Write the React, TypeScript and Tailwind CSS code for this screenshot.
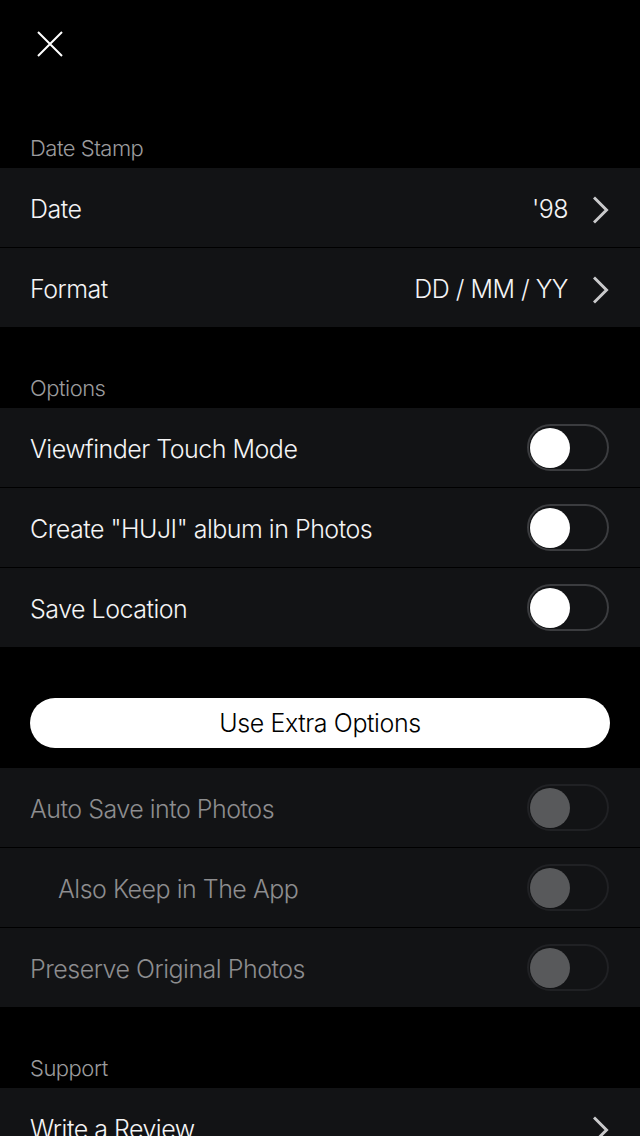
import React from "react";

const font = { fontFamily: "Inter, 'Noto Sans', sans-serif" };

function Chevron() {
  return (
    <svg width="16" height="28" viewBox="0 0 16 28" fill="none" aria-hidden className="mt-1 shrink-0">
      <path d="M2 2.5 L13.5 14 L2 25.5" stroke="#c9c9cb" strokeWidth="3" strokeLinecap="square" />
    </svg>
  );
}

function Toggle({ disabled }: { disabled?: boolean }) {
  return (
    <div
      className={
        "flex h-[47px] w-[82px] shrink-0 items-center rounded-full border-2 pl-px " +
        (disabled ? "border-[#202124]" : "border-[#3b3c3f]")
      }
    >
      <div className={"h-10 w-10 rounded-full " + (disabled ? "bg-[#58595b]" : "bg-white")} />
    </div>
  );
}

function SectionLabel({ children }: { children: React.ReactNode }) {
  return (
    <div className="flex h-20 items-end px-[30px] pb-[3px] text-[22px] font-light tracking-[-0.5px] text-[#9b9b9d]">
      {children}
    </div>
  );
}

function Row({
  label,
  value,
  chevron,
  toggle,
  disabled,
  indent,
}: {
  label: string;
  value?: string;
  chevron?: boolean;
  toggle?: boolean;
  disabled?: boolean;
  indent?: boolean;
}) {
  return (
    <div className="flex h-20 items-center border-b border-black bg-[#121315] pr-[31px] pl-[30px]">
      <span
        className={
          "flex-1 pt-[5px] text-[25px] font-light tracking-[-0.5px] " +
          (disabled ? "text-[#8d8d8f]" : "text-[#f4f4f5]") +
          (indent ? " pl-7" : "")
        }
      >
        {label}
      </span>
      {value && (
        <span className="mr-[25px] pt-[5px] text-[25px] font-light tracking-[-0.5px] text-[#f4f4f5]">{value}</span>
      )}
      {chevron && <Chevron />}
      {toggle && <Toggle disabled={disabled} />}
    </div>
  );
}

export default function App() {
  return (
    <div className="min-h-[1136px] w-full bg-black" style={font}>
      <div className="flex h-[88px] items-center pl-[37px]">
        <svg width="26" height="26" viewBox="0 0 26 26" aria-hidden>
          <path d="M1 1 L25 25 M25 1 L1 25" stroke="#ffffff" strokeWidth="2" />
        </svg>
      </div>

      <SectionLabel>Date Stamp</SectionLabel>
      <Row label="Date" value="'98" chevron />
      <Row label="Format" value="DD / MM / YY" chevron />

      <SectionLabel>Options</SectionLabel>
      <Row label="Viewfinder Touch Mode" toggle />
      <Row label={'Create "HUJI" album in Photos'} toggle />
      <Row label="Save Location" toggle />

      <div className="px-[30px] pt-[50px] pb-5">
        <button className="flex h-[50px] w-full items-center justify-center rounded-full bg-white pt-px text-[25px] font-light tracking-[-0.4px] text-black">
          Use Extra Options
        </button>
      </div>

      <Row label="Auto Save into Photos" toggle disabled />
      <Row label="Also Keep in The App" toggle disabled indent />
      <Row label="Preserve Original Photos" toggle disabled />

      <SectionLabel>Support</SectionLabel>
      <Row label="Write a Review" chevron />
    </div>
  );
}
